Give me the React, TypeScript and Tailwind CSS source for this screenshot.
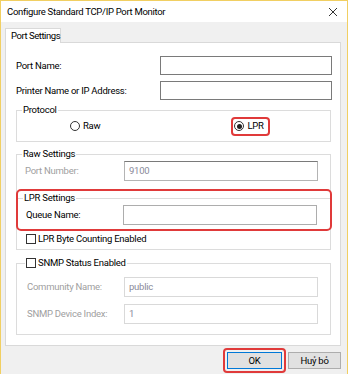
import React from "react";

function Radio({ checked, label }: { checked?: boolean; label: string }) {
  return (
    <span className="flex items-center gap-[3px] h-[12px]">
      <span className="w-[10px] h-[10px] rounded-full border border-[#333] bg-white flex items-center justify-center">
        {checked && <span className="w-[5px] h-[5px] rounded-full bg-[#222]" />}
      </span>
      <span>{label}</span>
    </span>
  );
}

function Check({ label }: { label: string }) {
  return (
    <span className="flex items-center gap-[2px] h-[12px]">
      <span className="w-[10px] h-[10px] border border-[#333] bg-white" />
      <span>{label}</span>
    </span>
  );
}

function Field({
  label,
  value,
  disabled,
  dark,
}: {
  label: string;
  value?: string;
  disabled?: boolean;
  dark?: boolean;
}) {
  return (
    <div className="flex items-center justify-between">
      <span className={disabled ? "text-[#a0a0a0]" : "text-black"}>{label}</span>
      <div
        className={`w-[194px] h-[20px] bg-white border flex items-center pl-[4px] ${
          dark ? "border-[#b4b4b4] border-t-[#7a7a7a]" : disabled ? "border-[#d9d9d9]" : "border-[#adadad]"
        } ${disabled ? "text-[#8a8a9a]" : "text-black"}`}
      >
        {value}
      </div>
    </div>
  );
}

export default function App() {
  return (
    <div className="w-[348px] h-[374px] bg-[#f0f0f0] border-t border-x border-[#f1cf62] flex flex-col font-['Roboto',sans-serif] text-[9.5px] tracking-[-0.25px] leading-[12px] text-black overflow-hidden">
      {/* Title bar */}
      <div className="h-[21px] bg-white flex items-center justify-between pl-[6px] pr-[6px] shrink-0">
        <span className="text-[9.5px] tracking-[-0.3px]">Configure Standard TCP/IP Port Monitor</span>
        <svg width="10" height="10" viewBox="0 0 10 10" className="mr-[3px]">
          <path d="M1 1 L9 9 M9 1 L1 9" stroke="#333" strokeWidth="1" />
        </svg>
      </div>

      <div className="flex-1 flex flex-col pl-[4px] pr-[6px] pt-[6px]">
        {/* Tab */}
        <div className="w-[56px] h-[15px] bg-white border border-b-0 border-[#d9d9d9] -mb-px relative z-10 pl-[5px] pt-[1px] whitespace-nowrap tracking-[-0.45px]">
          Port Settings
        </div>

        {/* Panel */}
        <div className="h-[304px] bg-white border border-[#d9d9d9] pl-[10px] pr-[9px] pt-[13px] flex flex-col">
          <div className="flex items-center justify-between">
            <span>Port Name:</span>
            <div className="w-[172px] h-[19px] border border-[#7a7a7a] -mr-px" />
          </div>
          <div className="flex items-center justify-between mt-[6px]">
            <span>Printer Name or IP Address:</span>
            <div className="w-[172px] h-[19px] border border-[#7a7a7a] -mr-px" />
          </div>

          {/* Protocol */}
          <fieldset className="mt-[4px] h-[38px] border border-[#dcdcdc]">
            <legend className="ml-[5px] px-[1px] leading-[12px]">Protocol</legend>
            <div className="flex items-center mt-[4px]">
              <span className="ml-[53px]">
                <Radio label="Raw" />
              </span>
              <span className="relative ml-[134px]">
                <Radio checked label="LPR" />
                <span className="absolute -left-[3px] -top-[3px] w-[39px] h-[19px] border-2 border-[#e03a3a] rounded-[4px]" />
              </span>
            </div>
          </fieldset>

          {/* Raw Settings */}
          <fieldset className="mt-[6px] h-[102px] border border-[#dcdcdc]">
            <legend className="ml-[5px] px-[1px] leading-[12px]">Raw Settings</legend>
            <div className="pl-[8px] pr-[12px] mt-[1px]">
              <Field label="Port Number:" value="9100" disabled dark />
            </div>

            <div className="relative mt-[11px]">
              <fieldset className="border-t border-[#dcdcdc]">
                <legend className="ml-[6px] px-[1px] leading-[12px]">LPR Settings</legend>
                <div className="pl-[9px] pr-[13px] mt-[1px]">
                  <Field label="Queue Name:" />
                </div>
              </fieldset>
              <span className="absolute -left-px -right-[2px] -top-[3px] h-[42px] border-2 border-[#e03a3a] rounded-[5px]" />
            </div>

            <div className="pl-[9px] mt-[8px]">
              <Check label="LPR Byte Counting Enabled" />
            </div>
          </fieldset>

          {/* SNMP */}
          <fieldset className="mt-[7px] h-[78px] border border-[#dcdcdc]">
            <legend className="ml-[8px] px-[1px] leading-[12px]">
              <Check label="SNMP Status Enabled" />
            </legend>
            <div className="pl-[10px] pr-[12px] mt-[8px] flex flex-col gap-[7px]">
              <Field label="Community Name:" value="public" disabled />
              <Field label="SNMP Device Index:" value="1" disabled />
            </div>
          </fieldset>
        </div>

        {/* Buttons */}
        <div className="flex justify-end gap-[6px] mt-[6px]">
          <div className="relative">
            <button className="w-[55px] h-[17px] bg-[#e1e1e1] border border-[#0078d7] leading-[15px]">
              OK
            </button>
            <span className="absolute -left-[4px] -right-[4px] -top-[4px] -bottom-[4px] border-2 border-[#e03a3a] rounded-[4px]" />
          </div>
          <button className="w-[53px] h-[17px] bg-[#e1e1e1] border border-[#adadad] leading-[15px]">
            Huỷ bỏ
          </button>
        </div>
      </div>
    </div>
  );
}
